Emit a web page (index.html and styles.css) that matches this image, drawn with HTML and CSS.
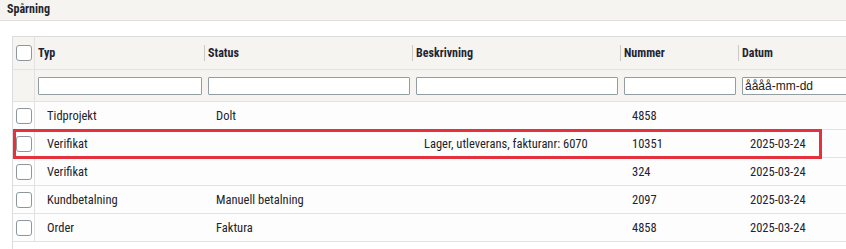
FILE: index.html
```html
<!DOCTYPE html>
<html lang="sv">
<head>
    <meta charset="UTF-8">
    <meta name="viewport" content="width=device-width, initial-scale=1.0">
    <title>Spårning</title>
    <link rel="stylesheet" href="styles.css">
</head>
<body>
    <div class="titlebar">Spårning</div>

    <div class="panel">
        <table class="grid">
            <colgroup>
                <col class="c-chk">
                <col class="c-typ">
                <col class="c-status">
                <col class="c-besk">
                <col class="c-nr">
                <col class="c-datum">
            </colgroup>
            <thead>
                <tr class="head">
                    <th class="chk"><span class="box"></span></th>
                    <th class="first"><span class="hd">Typ</span></th>
                    <th><span class="hd">Status</span></th>
                    <th><span class="hd">Beskrivning</span></th>
                    <th><span class="hd">Nummer</span></th>
                    <th><span class="hd">Datum</span></th>
                </tr>
                <tr class="filter">
                    <td class="chk"></td>
                    <td class="first"><input type="text"></td>
                    <td><input type="text"></td>
                    <td><input type="text"></td>
                    <td><input type="text"></td>
                    <td><input type="text" class="date" placeholder="åååå-mm-dd"></td>
                </tr>
            </thead>
            <tbody>
                <tr>
                    <td class="chk"><span class="box"></span></td>
                    <td>Tidprojekt</td>
                    <td>Dolt</td>
                    <td></td>
                    <td>4858</td>
                    <td></td>
                </tr>
                <tr>
                    <td class="chk"><span class="box"></span></td>
                    <td>Verifikat</td>
                    <td></td>
                    <td>Lager, utleverans, fakturanr: 6070</td>
                    <td>10351</td>
                    <td>2025-03-24</td>
                </tr>
                <tr>
                    <td class="chk"><span class="box"></span></td>
                    <td>Verifikat</td>
                    <td></td>
                    <td></td>
                    <td>324</td>
                    <td>2025-03-24</td>
                </tr>
                <tr>
                    <td class="chk"><span class="box"></span></td>
                    <td>Kundbetalning</td>
                    <td>Manuell betalning</td>
                    <td></td>
                    <td>2097</td>
                    <td>2025-03-24</td>
                </tr>
                <tr>
                    <td class="chk"><span class="box"></span></td>
                    <td>Order</td>
                    <td>Faktura</td>
                    <td></td>
                    <td>4858</td>
                    <td>2025-03-24</td>
                </tr>
            </tbody>
        </table>
        <!-- highlighted row -->
        <div class="mark"></div>
    </div>
</body>
</html>
```

FILE: styles.css
```css
html, body {
    margin: 0;
    background-color: #fff;
    overflow: hidden;
}
body {
    font-family: Roboto, "Liberation Sans", Arial, sans-serif;
    font-stretch: 78%;
    font-size: 13px;
    color: #22232a;
}
.titlebar {
    height: 20px;
    line-height: 19px;
    padding-left: 7px;
    font-size: 12px;
    font-weight: bold;
    color: #23262e;
    background-color: #f5f4f0;
    border-bottom: 1px solid #e0dfdc;
}
.panel {
    position: relative;
    margin-top: 15px;
    margin-left: 12px;
    border-left: 1px solid #dcdcdc;
    height: 213px;
    overflow: hidden;
}
.grid {
    border-collapse: separate;
    border-spacing: 0;
    table-layout: fixed;
    width: 900px;
    border-top: 1px solid #dcdcdc;
}
.c-chk { width: 22px; }
.c-typ { width: 169px; }
.c-status { width: 208px; }
.c-besk { width: 208px; }
.c-nr { width: 118px; }
.c-datum { width: 175px; }

.grid th, .grid td {
    padding: 0;
    text-align: left;
    vertical-align: middle;
    white-space: nowrap;
    border-bottom: 1px solid #e2e2e2;
}
.grid .chk {
    border-right: 1px solid #e2e2e2;
    padding-left: 3px;
}
.box {
    display: block;
    width: 14px;
    height: 14px;
    border: 1px solid #8e989c;
    border-radius: 3px;
    background-color: #fff;
}

/* header */
.grid .head th {
    height: 32px;
    background-color: #f5f4f0;
    font-size: 12px;
    font-weight: bold;
    color: #1f2433;
}
.hd {
    display: block;
    line-height: 16px;
    border-left: 1px solid #c9c9c9;
    padding-left: 3px;
}
.head .first .hd {
    border-left: none;
    padding-left: 3px;
}

/* filter row */
.grid .filter td {
    height: 31px;
    background-color: #f5f4f0;
    padding-left: 4px;
    padding-right: 2px;
}
.grid .filter .first,
.grid .filter .chk {
    padding-left: 3px;
}
.filter input {
    box-sizing: border-box;
    display: block;
    width: 100%;
    height: 18px;
    margin: 0;
    border: 1px solid #939ea2;
    border-radius: 1px;
    background-color: #fff;
    font-family: "Liberation Sans", Arial, sans-serif;
    font-size: 12px;
    padding: 0 0 0 2px;
}
.filter input.date::placeholder {
    color: #222;
    opacity: 1;
}

/* data rows */
.grid tbody td {
    height: 27px;
    background-color: #fefdfd;
    padding-left: 12px;
    font-size: 12.5px;
    font-stretch: 75%;
}
.grid tbody .chk {
    padding-left: 3px;
}

.mark {
    position: absolute;
    left: 0;
    top: 93px;
    width: 803px;
    height: 24px;
    border: 3px solid #e3313d;
}
```
